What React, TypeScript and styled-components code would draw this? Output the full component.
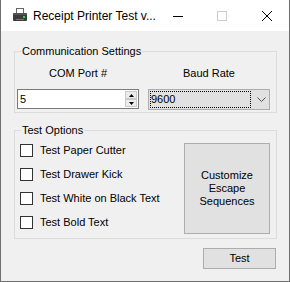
import React from "react"
import styled, { createGlobalStyle } from "styled-components"

const GlobalStyle = createGlobalStyle`
  html, body {
    margin: 0;
    padding: 0;
    background: #f0f0f0;
  }
  body {
    font-family: "Liberation Sans", Arial, sans-serif;
    font-size: 11px;
    color: #000;
  }
`

const Window = styled.div`
  background: #f0f0f0;
  border: 1px solid #6f6f6f;
  border-top: none;
  box-sizing: border-box;
  display: flex;
  flex-direction: column;
  height: 282px;
  width: 290px;
`

const TitleBar = styled.div`
  align-items: center;
  background: #fff;
  display: flex;
  flex-direction: row;
  height: 31px;
  padding-left: 11px;
`

const TitleIcon = styled.svg`
  flex: 0 0 auto;
  height: 16px;
  margin-right: 5px;
  width: 16px;
`

const TitleText = styled.div`
  flex: 1 1 auto;
  font-family: "Liberation Sans", Arial, sans-serif;
  font-size: 12px;
  line-height: 16px;
  white-space: nowrap;
`

const CaptionButton = styled.div`
  align-items: center;
  display: flex;
  height: 31px;
  justify-content: center;
  width: 46px;
`

const Body = styled.div`
  display: flex;
  flex: 1 1 auto;
  flex-direction: column;
  padding: 0 12px 0 13px;
`

const Group = styled.fieldset<{ $top: number }>`
  border: 1px solid #dcdcdc;
  margin: ${({ $top }) => $top}px 0 0 0;
  min-width: 0;
  padding: 0;
`

const GroupCaption = styled.legend`
  line-height: 13px;
  margin-left: 6px;
  padding: 0 1px;
`

const PortGrid = styled.div`
  display: grid;
  grid-template-columns: 122px 122px;
  column-gap: 9px;
  padding: 9px 6px 2px 2px;
`

const FieldLabel = styled.div`
  line-height: 13px;
  margin-bottom: 9px;
  text-align: center;
`

const NumericBox = styled.div`
  align-items: center;
  background: #fff;
  border: 1px solid #7a7a7a;
  box-sizing: border-box;
  display: flex;
  height: 20px;
  padding-left: 2px;
`

const NumericValue = styled.div`
  flex: 1 1 auto;
  line-height: 13px;
`

const Spinner = styled.div`
  display: flex;
  flex-direction: column;
  height: 16px;
  margin-right: 1px;
  width: 12px;
`

const SpinButton = styled.div`
  align-items: center;
  background: #ececec;
  border: 1px solid #c9c9c9;
  box-sizing: border-box;
  display: flex;
  flex: 1 1 0;
  justify-content: center;
`

const Combo = styled.div`
  align-items: center;
  background: #e1e1e1;
  border: 1px solid #adadad;
  box-sizing: border-box;
  display: flex;
  height: 21px;
  padding: 1px;
`

const ComboFocus = styled.div`
  align-items: center;
  border: 1px dotted #000;
  box-sizing: border-box;
  display: flex;
  height: 17px;
  line-height: 13px;
  width: 101px;
`

const ComboArrow = styled.svg`
  margin-left: 6px;
`

const OptionsRow = styled.div`
  align-items: flex-start;
  display: flex;
  flex-direction: row;
  justify-content: space-between;
  padding: 5px 6px 4px 5px;
`

const CheckList = styled.div`
  display: flex;
  flex-direction: column;
  gap: 7px;
`

const CheckRow = styled.label`
  align-items: center;
  align-self: flex-start;
  display: flex;
  flex-direction: row;
  gap: 7px;
  height: 17px;
  line-height: 13px;
`

const CheckBox = styled.span`
  background: #fff;
  border: 1px solid #333;
  box-sizing: border-box;
  display: inline-block;
  height: 13px;
  width: 13px;
`

const PushButton = styled.div<{ $width: number; $height: number; $offset?: number }>`
  align-items: center;
  background: #e1e1e1;
  border: 1px solid #adadad;
  box-sizing: border-box;
  display: flex;
  height: ${({ $height }) => $height}px;
  justify-content: center;
  line-height: 13px;
  margin-top: ${({ $offset }) => $offset ?? 0}px;
  text-align: center;
  width: ${({ $width }) => $width}px;
`

const Footer = styled.div`
  display: flex;
  justify-content: flex-end;
  margin-top: 9px;
  padding-right: 1px;
`

const PrinterIcon = () => (
  <TitleIcon viewBox="0 0 16 16">
    <rect x="4.5" y="0.5" width="7" height="5" fill="#fff" stroke="#666" />
    <rect x="1" y="5" width="14" height="8" rx="1" fill="#3c3c3c" />
    <rect x="1" y="5" width="14" height="2" fill="#555" />
    <rect x="4" y="11" width="8" height="1" fill="#777" />
    <rect x="11" y="8" width="2" height="2" fill="#3ccf4e" />
  </TitleIcon>
)

const options = [
  "Test Paper Cutter",
  "Test Drawer Kick",
  "Test White on Black Text",
  "Test Bold Text",
]

const App = () => {
  return (
    <>
      <GlobalStyle />
      <Window>
        <TitleBar>
          <PrinterIcon />
          <TitleText>Receipt Printer Test v...</TitleText>
          <CaptionButton>
            <svg width="10" height="10" viewBox="0 0 10 10">
              <rect x="0" y="5" width="10" height="1" fill="#000" />
            </svg>
          </CaptionButton>
          <CaptionButton>
            <svg width="10" height="10" viewBox="0 0 10 10">
              <rect x="0.5" y="0.5" width="9" height="9" fill="none" stroke="#cccccc" />
            </svg>
          </CaptionButton>
          <CaptionButton>
            <svg width="10" height="10" viewBox="0 0 10 10">
              <path d="M0 0 L10 10 M10 0 L0 10" stroke="#000" strokeWidth="1" />
            </svg>
          </CaptionButton>
        </TitleBar>
        <Body>
          <Group $top={14}>
            <GroupCaption>Communication Settings</GroupCaption>
            <PortGrid>
              <FieldLabel>COM Port #</FieldLabel>
              <FieldLabel>Baud Rate</FieldLabel>
              <NumericBox>
                <NumericValue>5</NumericValue>
                <Spinner>
                  <SpinButton>
                    <svg width="5" height="3" viewBox="0 0 5 3">
                      <path d="M2.5 0 L5 3 L0 3 Z" fill="#000" />
                    </svg>
                  </SpinButton>
                  <SpinButton>
                    <svg width="5" height="3" viewBox="0 0 5 3">
                      <path d="M0 0 L5 0 L2.5 3 Z" fill="#000" />
                    </svg>
                  </SpinButton>
                </Spinner>
              </NumericBox>
              <Combo>
                <ComboFocus>9600</ComboFocus>
                <ComboArrow width="9" height="5" viewBox="0 0 9 5">
                  <path d="M0.5 0.5 L4.5 4.5 L8.5 0.5" fill="none" stroke="#555" />
                </ComboArrow>
              </Combo>
            </PortGrid>
          </Group>
          <Group $top={11}>
            <GroupCaption>Test Options</GroupCaption>
            <OptionsRow>
              <CheckList>
                {options.map(option => (
                  <CheckRow key={option}>
                    <CheckBox />
                    {option}
                  </CheckRow>
                ))}
              </CheckList>
              <PushButton $width={86} $height={91} $offset={1}>
                Customize
                <br />
                Escape
                <br />
                Sequences
              </PushButton>
            </OptionsRow>
          </Group>
          <Footer>
            <PushButton $width={73} $height={21}>
              Test
            </PushButton>
          </Footer>
        </Body>
      </Window>
    </>
  )
}

export default App
